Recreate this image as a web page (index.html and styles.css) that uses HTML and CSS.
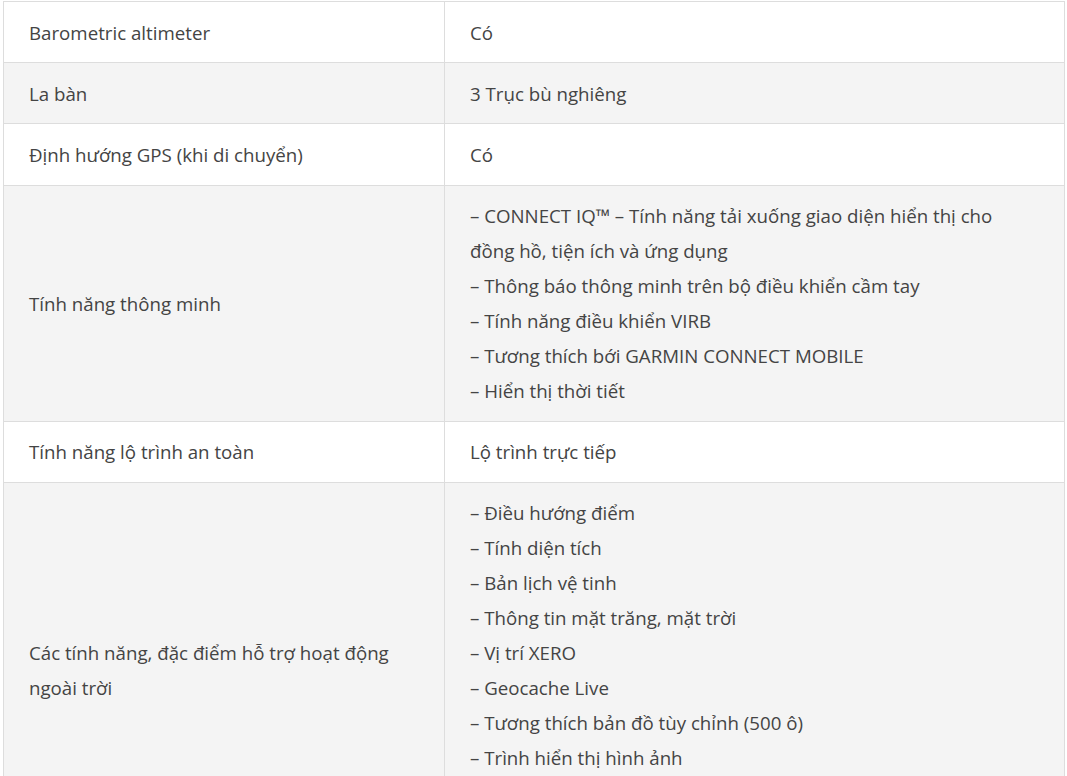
FILE: index.html
```html
<!DOCTYPE html>
<html lang="vi">
<head>
<meta charset="utf-8">
<title>Thông số</title>
<link rel="stylesheet" href="styles.css">
</head>
<body>
<div class="page">
<table class="specs">
  <colgroup><col class="c-label"><col class="c-value"></colgroup>
  <tbody>
    <tr><td>Barometric altimeter</td><td>Có</td></tr>
    <tr><td>La bàn</td><td>3 Trục bù nghiêng</td></tr>
    <tr><td>Định hướng GPS (khi di chuyển)</td><td>Có</td></tr>
    <tr><td>Tính năng thông minh</td><td>– CONNECT IQ™ – Tính năng tải xuống giao diện hiển thị cho đồng hồ, tiện ích và ứng dụng<br>– Thông báo thông minh trên bộ điều khiển cầm tay<br>– Tính năng điều khiển VIRB<br>– Tương thích bới GARMIN CONNECT MOBILE<br>– Hiển thị thời tiết</td></tr>
    <tr><td>Tính năng lộ trình an toàn</td><td>Lộ trình trực tiếp</td></tr>
    <tr><td>Các tính năng, đặc điểm hỗ trợ hoạt động ngoài trời</td><td>– Điều hướng điểm<br>– Tính diện tích<br>– Bản lịch vệ tinh<br>– Thông tin mặt trăng, mặt trời<br>– Vị trí XERO<br>– Geocache Live<br>– Tương thích bản đồ tùy chỉnh (500 ô)<br>– Trình hiển thị hình ảnh<br>– Lịch săn bắn và câu cá<br>– Tính năng TracBack®</td></tr>
  </tbody>
</table>
</div>
</body>
</html>
```

FILE: styles.css
```css
html, body {
  margin: 0;
  padding: 0;
  background: #fff;
}
.page {
  padding: 1px 3px 0 3px;
}
.specs {
  width: 1061px;
  border-collapse: collapse;
  table-layout: fixed;
  font-family: "Open Sans", "Noto Sans", sans-serif;
  font-size: 18.7px;
  line-height: 35px;
  color: #444;
}
.c-label { width: 441px; }
.c-value { width: 620px; }
.specs td {
  border: 1px solid #ddd;
  padding: 12.5px 32px 12.7px 25px;
  vertical-align: middle;
  text-align: left;
}
.specs tr:nth-child(even) td {
  background: #f4f4f4;
}
```
